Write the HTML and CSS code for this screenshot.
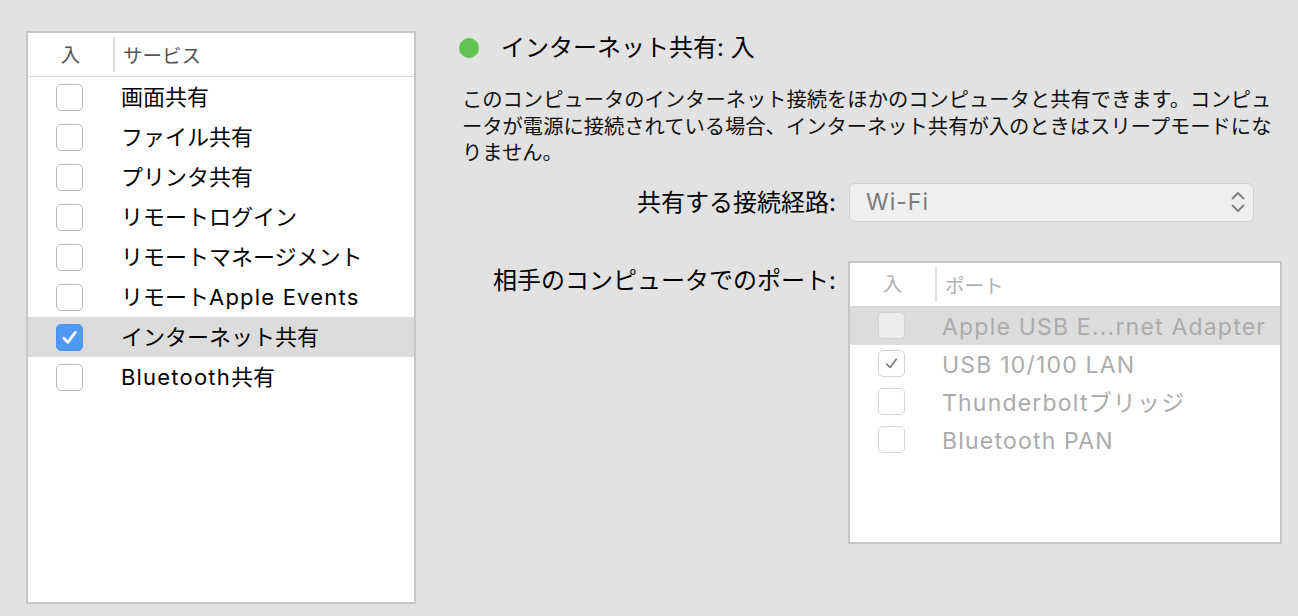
FILE: index.html
```html
<!DOCTYPE html>
<html lang="ja">
<head>
<meta charset="utf-8">
<title>共有</title>
<link rel="stylesheet" href="styles.css">
</head>
<body>
<div class="pane">
  <div class="services">
    <div class="thead">
      <div class="col-on">入</div>
      <div class="col-name">サービス</div>
    </div>
    <ul class="rows">
      <li class="row"><span class="cb"></span><span class="label">画面共有</span></li>
      <li class="row"><span class="cb"></span><span class="label">ファイル共有</span></li>
      <li class="row"><span class="cb"></span><span class="label">プリンタ共有</span></li>
      <li class="row"><span class="cb"></span><span class="label">リモートログイン</span></li>
      <li class="row"><span class="cb"></span><span class="label">リモートマネージメント</span></li>
      <li class="row"><span class="cb"></span><span class="label">リモート<span class="lat">Apple Events</span></span></li>
      <li class="row selected"><span class="cb checked"><svg viewBox="0 0 27 27" width="27" height="27"><path d="M7.3 14.2 L11.6 18.8 L19.8 8" fill="none" stroke="#fff" stroke-width="2.9" stroke-linecap="round" stroke-linejoin="round"/></svg></span><span class="label">インターネット共有</span></li>
      <li class="row"><span class="cb"></span><span class="label"><span class="lat">Bluetooth</span>共有</span></li>
    </ul>
  </div>

  <div class="detail">
    <div class="status">
      <span class="dot"></span>
      <h1 class="title">インターネット共有: 入</h1>
    </div>
    <p class="desc">このコンピュータのインターネット接続をほかのコンピュータと共有できます。コンピュ<br>ータが電源に接続されている場合、インターネット共有が入のときはスリープモードにな<br>りません。</p>

    <div class="form">
      <div class="flabel">共有する接続経路:</div>
      <div class="popup">
        <span class="popup-text">Wi-Fi</span>
        <svg class="chev" viewBox="0 0 16 26" width="16" height="26"><path d="M2.5 9.5 L8 4 L13.5 9.5 M2.5 16.5 L8 22 L13.5 16.5" fill="none" stroke="#7d7d7d" stroke-width="1.8" stroke-linecap="round" stroke-linejoin="round"/></svg>
      </div>

      <div class="flabel ports-label">相手のコンピュータでのポート:</div>
      <div class="ports">
        <div class="thead pthead">
          <div class="col-on">入</div>
          <div class="col-name">ポート</div>
        </div>
        <ul class="prows">
          <li class="prow selected"><span class="cb dis"></span><span class="plabel">Apple USB E...rnet Adapter</span></li>
          <li class="prow"><span class="cb dis"><svg viewBox="0 0 27 27" width="27" height="27"><path d="M8.3 14 L12 17.8 L18.6 9" fill="none" stroke="#777" stroke-width="1.8" stroke-linecap="round" stroke-linejoin="round"/></svg></span><span class="plabel">USB 10/100 LAN</span></li>
          <li class="prow"><span class="cb dis"></span><span class="plabel">Thunderboltブリッジ</span></li>
          <li class="prow"><span class="cb dis"></span><span class="plabel">Bluetooth PAN</span></li>
        </ul>
      </div>
    </div>
  </div>
</div>
</body>
</html>
```

FILE: styles.css
```css
* { box-sizing: border-box; }

html, body {
  margin: 0;
  padding: 0;
}

body {
  width: 1298px;
  height: 616px;
  overflow: hidden;
  background: #e2e2e2;
  font-family: Inter, "Noto Sans CJK JP", sans-serif;
  color: #000;
}

.pane {
  display: flex;
  padding: 31px 0 0 26px;
}

/* ---------- left service list ---------- */
.services {
  width: 390px;
  height: 573px;
  background: #fff;
  border: 2px solid #c6c6c6;
}

.thead {
  display: flex;
  align-items: center;
  height: 44px;
  border-bottom: 1px solid #d8d8d8;
}

.col-on {
  width: 85px;
  text-align: center;
  font-size: 19.5px;
  color: #555;
  line-height: 26px;
}

.col-name {
  flex: 1;
  height: 35px;
  display: flex;
  align-items: center;
  border-left: 2px solid #dcdcdc;
  padding-left: 8px;
  font-size: 19.5px;
  color: #555;
}

.rows, .prows {
  list-style: none;
  margin: 0;
  padding: 0;
}

.row {
  display: flex;
  align-items: center;
  height: 40px;
}

.row.selected {
  background: #dcdcdc;
}

.cb {
  flex: none;
  width: 27px;
  height: 27px;
  margin-left: 28px;
  border: 1px solid #b9b9b9;
  border-radius: 5px;
  background: #fff;
  display: flex;
  align-items: center;
  justify-content: center;
}

.cb svg { display: block; }

.cb.checked {
  background: #4f98f4;
  border-color: #4a92ee;
}

.label {
  margin-left: 38px;
  font-size: 22px;
  line-height: 28px;
  white-space: nowrap;
  color: #000;
}

.lat {
  letter-spacing: 1.2px;
}

/* ---------- right detail ---------- */
.detail {
  margin-left: 43px;
  flex: 1;
}

.status {
  display: flex;
  align-items: center;
  height: 34px;
}

.dot {
  width: 20px;
  height: 20px;
  border-radius: 50%;
  background: #60c552;
  flex: none;
}

.title {
  margin: 0 0 0 22px;
  font-size: 24px;
  font-weight: normal;
  line-height: 30px;
  color: #000;
  white-space: nowrap;
}

.desc {
  margin: 22px 0 0 3px;
  font-size: 20.3px;
  line-height: 26.5px;
  color: #111;
  white-space: nowrap;
}

.form {
  margin-top: 16px;
  display: grid;
  grid-template-columns: 377px 434px;
  column-gap: 12px;
  row-gap: 40px;
}

.flabel {
  text-align: right;
  font-size: 24px;
  line-height: 39px;
  color: #000;
  white-space: nowrap;
}

.ports-label {
  line-height: 30px;
  padding-top: 4px;
}

.popup {
  margin-left: 1px;
  width: 405px;
  height: 39px;
  background: #efefef;
  border: 1px solid #d2d2d2;
  border-radius: 6px;
  display: flex;
  align-items: center;
  justify-content: space-between;
  padding: 0 7px 0 16px;
}

.popup-text {
  font-size: 23px;
  letter-spacing: 1px;
  color: #7b7b7b;
}

.chev { display: block; }

.ports {
  margin-top: -1px;
  width: 434px;
  height: 283px;
  background: #fff;
  border: 2px solid #c6c6c6;
}

.pthead {
  height: 44px;
}

.pthead .col-on,
.pthead .col-name {
  color: #b0b0b0;
}

.pthead .col-name {
  border-left-color: #e2e2e2;
}

.prow {
  display: flex;
  align-items: center;
  height: 38px;
}

.prow.selected {
  background: #dcdcdc;
}

.cb.dis {
  border-color: #d3d3d3;
  background: rgba(255, 255, 255, 0.45);
}

.plabel {
  margin-left: 37px;
  padding-top: 2px;
  font-size: 23px;
  line-height: 28px;
  color: #ababab;
  white-space: nowrap;
  letter-spacing: 1.2px;
}
```
